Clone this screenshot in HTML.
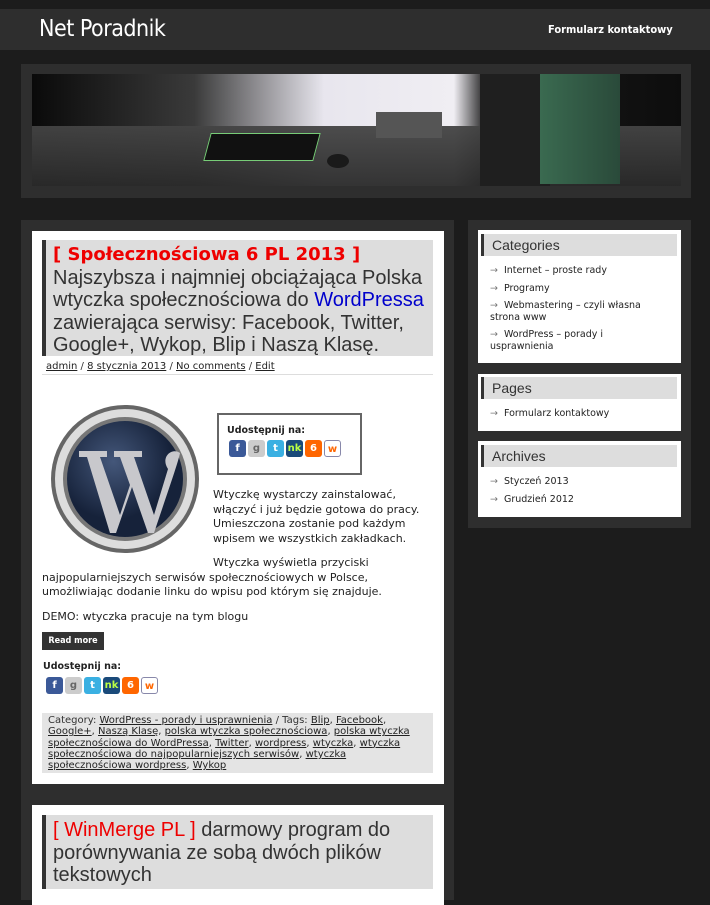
<!DOCTYPE html><html><head><meta charset="utf-8"><style>
*{margin:0;padding:0;box-sizing:border-box}
body{width:710px;height:893px;background:#1c1c1c;font-family:"DejaVu Sans",Verdana,sans-serif;font-size:11px;color:#222;position:relative;overflow:hidden}
.a{position:absolute}
a{color:#222}
.ic{display:inline-block;width:17px;height:17px;border-radius:3px;margin-right:2px;vertical-align:top;color:#fff;font-size:10px;font-weight:bold;text-align:center;line-height:17px}
.wt{position:absolute;left:3px;right:4px;top:4px;height:22px;background:#ddd;border-left:3px solid #333;font-family:"Liberation Sans",sans-serif;font-size:14px;color:#333;padding:3px 0 0 8px}
.wl{position:absolute;left:12px;width:168px;font-size:9.5px;color:#222;line-height:16px}
.wl span{color:#777;margin-right:6px}
</style></head><body>
<div class="a" style="left:0;top:9px;width:710px;height:41px;background:#2e2e2e"></div>
<div class="a" style="left:39px;top:16px;font-family:'DejaVu Sans Condensed','Liberation Sans Narrow',sans-serif;font-size:23px;color:#fff;letter-spacing:-0.5px">Net Poradnik</div>
<div class="a" style="left:548px;top:23px;font-family:'DejaVu Sans Condensed',sans-serif;font-size:11px;font-weight:bold;color:#fff">Formularz kontaktowy</div>
<div class="a" style="left:21px;top:64px;width:670px;height:134px;background:#2e2e2e"></div>
<div class="a" style="left:32px;top:74px;width:649px;height:112px;background:linear-gradient(90deg,#0a0a0a 0%,#3a3a3a 25%,#e8e6ee 45%,#f0eef3 65%,#1a1a1a 70%,#0d0d0d 100%)"></div>
<div class="a" style="left:32px;top:126px;width:649px;height:60px;background:linear-gradient(180deg,#444,#2a2a2a);opacity:.95"></div>
<div class="a" style="left:207px;top:133px;width:110px;height:28px;background:#111;transform:skewX(-15deg);border:1px solid #7c7"></div>
<div class="a" style="left:327px;top:154px;width:22px;height:14px;background:#1a1a1a;border-radius:50%"></div>
<div class="a" style="left:376px;top:112px;width:66px;height:26px;background:#555"></div>
<div class="a" style="left:480px;top:74px;width:70px;height:112px;background:#1f1f1f"></div>
<div class="a" style="left:540px;top:74px;width:80px;height:110px;background:linear-gradient(90deg,#3a6a50,#2a4a3a)"></div>
<div class="a" style="left:21px;top:220px;width:433px;height:680px;background:#2e2e2e"></div>
<div class="a" style="left:32px;top:231px;width:412px;height:553px;background:#fff"></div>
<div class="a" style="left:42px;top:240px;width:391px;height:116px;background:#ddd;border-left:4px solid #333"></div>
<div class="a" style="left:53px;top:243px;width:380px;font-family:'Liberation Sans',sans-serif;font-size:20px;line-height:22.5px;color:#333"><b style="color:#e00;font-family:'DejaVu Sans',sans-serif;font-size:18px">[ Społecznościowa 6 PL 2013 ]</b><br>Najszybsza i najmniej obciążająca Polska wtyczka społecznościowa do <span style="color:#00c">WordPressa</span> zawierająca serwisy: Facebook, Twitter, Google+, Wykop, Blip i Naszą Klasę.</div>
<div class="a" style="left:46px;top:361px;font-size:10px;color:#333"><a href="#">admin</a> / <a href="#">8 stycznia 2013</a> / <a href="#">No comments</a> / <a href="#">Edit</a></div>
<div class="a" style="left:42px;top:374px;width:391px;height:1px;background:#ddd"></div>
<svg class="a" style="left:49px;top:403px" width="152" height="152" viewBox="0 0 152 152"><defs><radialGradient id="g" cx="40%" cy="35%"><stop offset="0" stop-color="#44577a"/><stop offset="1" stop-color="#16223a"/></radialGradient></defs><circle cx="76" cy="76" r="74" fill="#666"/><circle cx="76" cy="76" r="70" fill="#ddd"/><circle cx="76" cy="76" r="62" fill="#777"/><circle cx="76" cy="76" r="58" fill="url(#g)"/><path d="M30 48h28v6h-7l20 58 10-30-10-28h-6v-6h28v6h-8l20 58 14-46c-8-12 4-22 12-16-2 10-12 38-26 80h-6l-16-46-16 46h-6L38 54h-8z" fill="#c8c8cc"/></svg>
<div class="a" style="left:217px;top:413px;width:145px;height:62px;border:2px solid #666"></div>
<div class="a" style="left:227px;top:425px;font-size:9.5px;font-weight:bold">Udostępnij na:</div>
<div class="a" style="left:229px;top:440px;white-space:nowrap"><span class="ic" style="background:#3b5998">f</span><span class="ic" style="background:#ccc;color:#666">g</span><span class="ic" style="background:#3ab0e2">t</span><span class="ic" style="background:#1a4a7a;color:#bf4">nk</span><span class="ic" style="background:#f60">6</span><span class="ic" style="background:#fff;border:1px solid #88a;color:#f60">w</span></div>
<div class="a" style="left:213px;top:488px;width:225px;line-height:14.5px">Wtyczkę wystarczy zainstalować, włączyć i już będzie gotowa do pracy. Umieszczona zostanie pod każdym wpisem we wszystkich zakładkach.</div>
<div class="a" style="left:42px;top:556px;width:395px;line-height:14.5px"><span style="display:inline-block;width:171px"></span>Wtyczka wyświetla przyciski najpopularniejszych serwisów społecznościowych w Polsce, umożliwiając dodanie linku do wpisu pod którym się znajduje.</div>
<div class="a" style="left:42px;top:610px">DEMO: wtyczka pracuje na tym blogu</div>
<div class="a" style="left:42px;top:632px;width:62px;height:18px;background:#333;color:#fff;font-family:'DejaVu Sans Condensed',sans-serif;font-size:9px;font-weight:bold;text-align:center;line-height:18px">Read more</div>
<div class="a" style="left:43px;top:661px;font-size:9.5px;font-weight:bold">Udostępnij na:</div>
<div class="a" style="left:46px;top:677px;white-space:nowrap"><span class="ic" style="background:#3b5998">f</span><span class="ic" style="background:#ccc;color:#666">g</span><span class="ic" style="background:#3ab0e2">t</span><span class="ic" style="background:#1a4a7a;color:#bf4">nk</span><span class="ic" style="background:#f60">6</span><span class="ic" style="background:#fff;border:1px solid #88a;color:#f60">w</span></div>
<div class="a" style="left:42px;top:713px;width:391px;height:60px;background:#e4e4e4;padding:2px 6px;font-size:10px;line-height:11.3px;color:#333">Category: <a href="#">WordPress - porady i usprawnienia</a> / Tags: <a href="#">Blip</a>, <a href="#">Facebook</a>, <a href="#">Google+</a>, <a href="#">Naszą Klasę</a>, <a href="#">polska wtyczka społecznościowa</a>, <a href="#">polska wtyczka społecznościowa do WordPressa</a>, <a href="#">Twitter</a>, <a href="#">wordpress</a>, <a href="#">wtyczka</a>, <a href="#">wtyczka społecznościowa do najpopularniejszych serwisów</a>, <a href="#">wtyczka społecznościowa wordpress</a>, <a href="#">Wykop</a></div>
<div class="a" style="left:32px;top:805px;width:412px;height:100px;background:#fff"></div>
<div class="a" style="left:42px;top:815px;width:391px;height:74px;background:#ddd;border-left:4px solid #333"></div>
<div class="a" style="left:53px;top:819px;width:375px;font-family:'Liberation Sans',sans-serif;font-size:20px;line-height:22.5px;color:#333"><span style="color:#e00">[ WinMerge PL ]</span> darmowy program do porównywania ze sobą dwóch plików tekstowych</div>
<div class="a" style="left:468px;top:220px;width:223px;height:308px;background:#2e2e2e"></div>
<div class="a" style="left:478px;top:230px;width:203px;height:133px;background:#fff"><div class="wt">Categories</div>
<div class="wl" style="top:33px"><span>→</span>Internet – proste rady</div>
<div class="wl" style="top:51px"><span>→</span>Programy</div>
<div class="wl" style="top:70px;line-height:11.5px"><span>→</span>Webmastering – czyli własna strona www</div>
<div class="wl" style="top:99px;line-height:11.5px;width:140px"><span>→</span>WordPress – porady i usprawnienia</div></div>
<div class="a" style="left:478px;top:374px;width:203px;height:57px;background:#fff"><div class="wt" style="top:3px">Pages</div>
<div class="wl" style="top:32px"><span>→</span>Formularz kontaktowy</div></div>
<div class="a" style="left:478px;top:441px;width:203px;height:76px;background:#fff"><div class="wt" style="top:4px">Archives</div>
<div class="wl" style="top:33px"><span>→</span>Styczeń 2013</div>
<div class="wl" style="top:51px"><span>→</span>Grudzień 2012</div></div>
</body></html>
